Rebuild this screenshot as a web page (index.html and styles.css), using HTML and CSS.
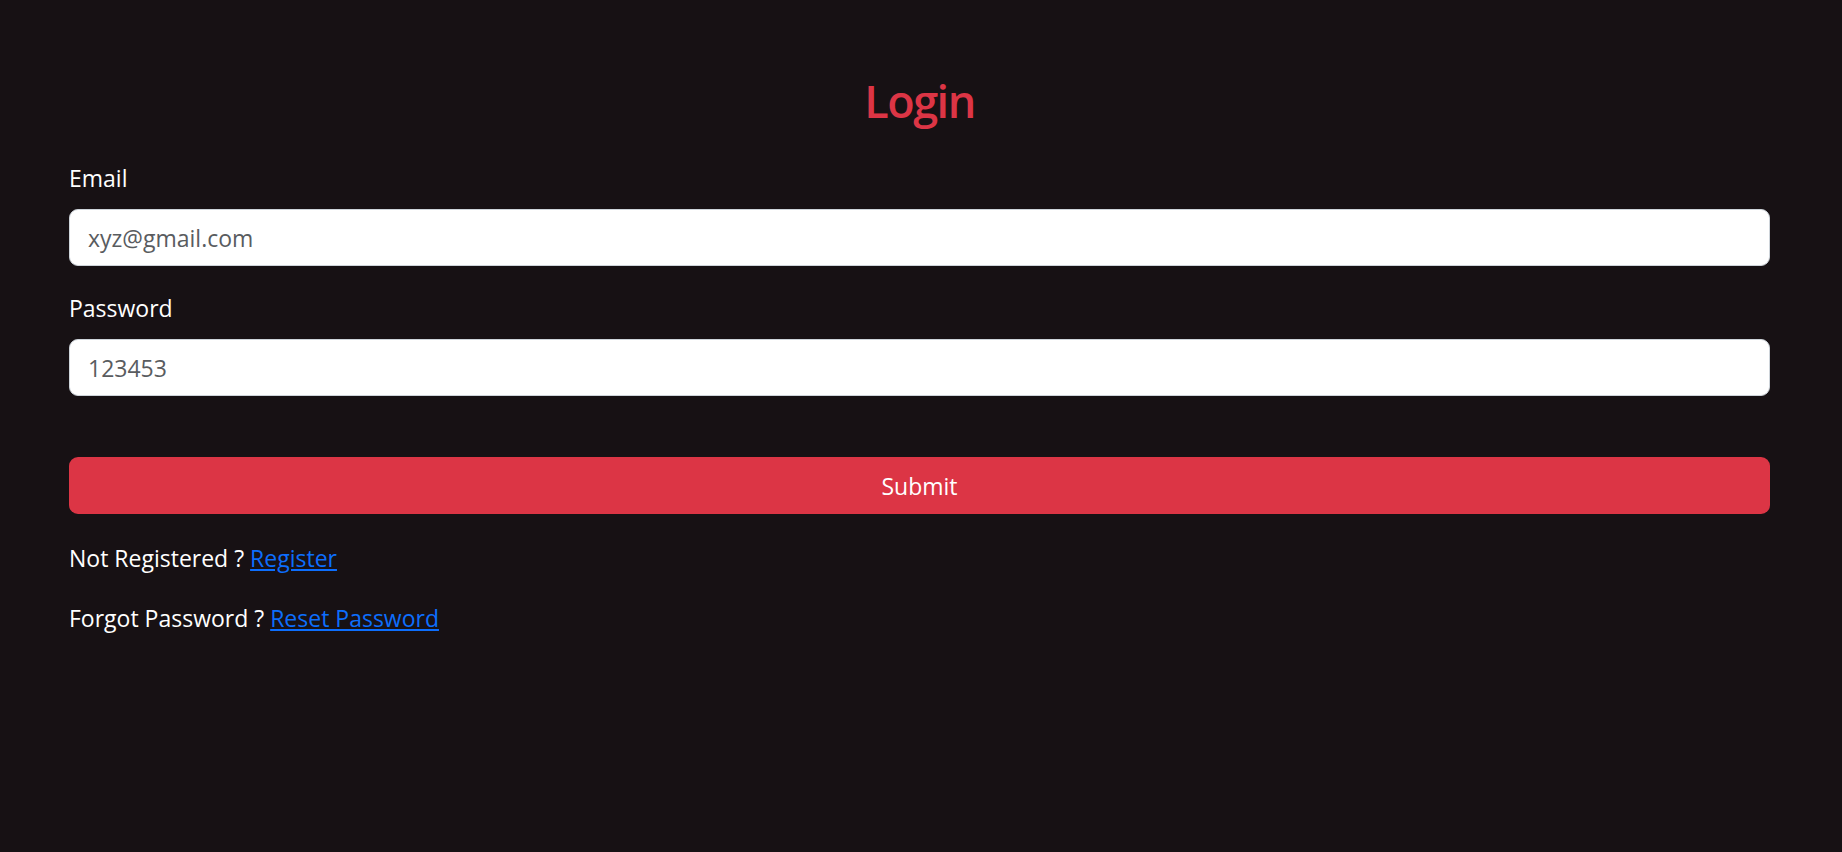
FILE: index.html
```html
<!DOCTYPE html>
<html lang="en">
  <head>
    <meta charset="UTF-8" />
    <meta name="viewport" content="width=device-width, initial-scale=1.0" />
    <title>Login</title>
    <link rel="stylesheet" href="styles.css">
  </head>
  <body>
    <div class="container">
      <h2 class="title">Login</h2>
      <form class="login-form" onsubmit="return false;">
        <div class="field">
          <label class="label" for="email">Email</label>
          <input class="input" type="email" id="email" placeholder="xyz@gmail.com" />
        </div>
        <div class="field">
          <label class="label" for="password">Password</label>
          <input class="input" type="text" id="password" placeholder="123453" />
        </div>
        <button class="submit-btn" type="submit">Submit</button>
      </form>
      <p class="note">Not Registered ? <a href="#">Register</a></p>
      <p class="note">Forgot Password ? <a href="#">Reset Password</a></p>
    </div>
  </body>
</html>
```

FILE: styles.css
```css
body {
  font-family: "Open Sans", "Noto Sans", sans-serif;
  font-size: 23px;
  line-height: 36px;
  background-color: #171114;
  color: #ffffff;
  margin: 0;
  padding: 0;
}
.container {
  padding: 72px 72px 0 69px;
}
.title {
  margin: 0 0 30px 0;
  text-align: center;
  font-size: 45px;
  letter-spacing: -1.5px;
  line-height: 58px;
  font-weight: 600;
  color: #dc3545;
}
.field {
  margin-bottom: 24px;
}
.label {
  display: block;
  margin-bottom: 13px;
}
.input {
  display: block;
  width: 100%;
  box-sizing: border-box;
  height: 57px;
  padding: 0 18px;
  font-family: inherit;
  font-size: 23px;
  color: #212529;
  background-color: #ffffff;
  border: 1px solid #ced4da;
  border-radius: 9px;
  outline: none;
}
.input::placeholder {
  color: #595c5f;
}
.submit-btn {
  display: block;
  width: 100%;
  height: 57px;
  margin-top: 61px;
  font-family: inherit;
  font-size: 23px;
  color: #ffffff;
  background-color: #dc3545;
  border: none;
  border-radius: 9px;
  cursor: pointer;
}
.login-form {
  margin-bottom: 26px;
}
.note {
  margin: 0 0 24px 0;
}
.note a {
  color: #0d6efd;
}
```
